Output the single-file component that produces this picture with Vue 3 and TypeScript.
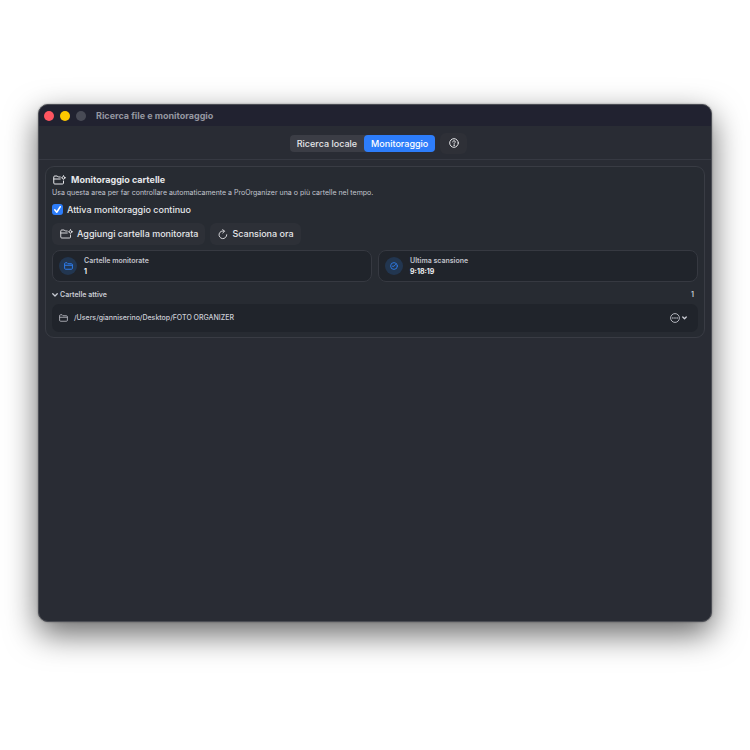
<script setup lang="ts">
import { ref } from 'vue'

type Tab = 'search' | 'watch'

const tabs: { id: Tab; label: string }[] = [
  { id: 'search', label: 'Ricerca locale' },
  { id: 'watch', label: 'Monitoraggio' },
]
const activeTab = ref<Tab>('watch')
const continuous = ref(true)
const expanded = ref(true)
const folders = ref<string[]>(['/Users/gianniserino/Desktop/FOTO ORGANIZER'])
const lastScan = ref('9:18:19')

function scanNow(): void {
  lastScan.value = new Date().toLocaleTimeString('it-IT')
}
</script>

<template>
  <div class="desktop">
    <main class="window">
      <header class="titlebar">
        <span class="light red"></span>
        <span class="light yellow"></span>
        <span class="light grey"></span>
        <h1 class="title">Ricerca file e monitoraggio</h1>
      </header>

      <nav class="toolbar">
        <div class="segments">
          <button
            v-for="tab in tabs"
            :key="tab.id"
            type="button"
            class="segment"
            :class="{ active: activeTab === tab.id }"
            :aria-pressed="activeTab === tab.id"
            @click="activeTab = tab.id"
          >
            {{ tab.label }}
          </button>
        </div>
        <button type="button" class="help" aria-label="Aiuto">
          <svg width="10" height="10" viewBox="0 0 20 20" fill="none" stroke="currentColor" stroke-width="2" stroke-linecap="round">
            <circle cx="10" cy="10" r="8.6" />
            <path d="M7.5 8c0-1.5 1.1-2.5 2.6-2.5s2.5 1 2.5 2.3c0 1.7-2.5 1.9-2.5 3.7" />
            <circle cx="10.1" cy="14.3" r=".5" />
          </svg>
        </button>
      </nav>

      <div class="content">
        <section class="panel">
          <h2 class="heading">
            <svg width="13" height="10" viewBox="0 0 26 20" fill="none" stroke="currentColor" stroke-width="2" stroke-linejoin="round" stroke-linecap="round">
              <path d="M14.5 4h-4L8.5 2h-5a2 2 0 0 0-2 2v12a2 2 0 0 0 2 2H19a2 2 0 0 0 2-2v-3.500M1.500 8h13" />
              <circle cx="21" cy="5.500" r="2.600" />
              <path d="M21 .8v.6M21 9.600v.6M16.600 5.500h.4M25 5.500h.4" stroke-width="1.400" />
            </svg>
            Monitoraggio cartelle
          </h2>
          <p class="description">
            Usa questa area per far controllare automaticamente a ProOrganizer una o più cartelle nel tempo.
          </p>

          <label class="check">
            <span class="box">
              <input v-model="continuous" type="checkbox" />
              <svg v-if="continuous" width="11" height="11" viewBox="0 0 22 22" fill="none" stroke="#fff" stroke-width="3" stroke-linecap="round" stroke-linejoin="round">
                <path d="M5.500 11.500l4 5L16.500 5.500" />
              </svg>
            </span>
            Attiva monitoraggio continuo
          </label>

          <div class="actions">
            <button type="button" class="action">
              <svg width="13" height="10" viewBox="0 0 26 20" fill="none" stroke="currentColor" stroke-width="1.800" stroke-linejoin="round" stroke-linecap="round">
                <path d="M14.500 4h-4L8.500 2h-5a2 2 0 0 0-2 2v12a2 2 0 0 0 2 2H19a2 2 0 0 0 2-2v-3.500M1.500 8h13" />
                <circle cx="21" cy="5.500" r="2.600" />
                <path d="M21 .8v.6M21 9.600v.6M16.600 5.500h.4M25 5.500h.4" stroke-width="1.400" />
              </svg>
              Aggiungi cartella monitorata
            </button>
            <button type="button" class="action" @click="scanNow">
              <svg width="10" height="11" viewBox="0 0 20 22" fill="none" stroke="currentColor" stroke-width="1.800" stroke-linejoin="round" stroke-linecap="round">
                <path d="M17.500 11.500a7.700 7.700 0 1 1-5-7.200M9.500 1l3.500 3.500-3.500 3.500" />
              </svg>
              Scansiona ora
            </button>
          </div>

          <div class="stats">
            <div class="stat">
              <span class="badge">
                <svg width="9" height="8" viewBox="0 0 18 16" fill="none" stroke="currentColor" stroke-width="1.900" stroke-linejoin="round">
                  <path d="M1.200 12.500v-9a2 2 0 0 1 2-2h3l2 2h6.600a2 2 0 0 1 2 2v7a2 2 0 0 1-2 2H3.200a2 2 0 0 1-2-2zM1.200 6.500h15.600" />
                </svg>
              </span>
              <div class="figures">
                <span class="caption">Cartelle monitorate</span>
                <strong class="value">{{ folders.length }}</strong>
              </div>
            </div>
            <div class="stat">
              <span class="badge">
                <svg width="8" height="8" viewBox="0 0 16 16" fill="none" stroke="currentColor" stroke-width="1.700" stroke-linecap="round">
                  <circle cx="8" cy="8" r="6.800" />
                  <path d="M11 5L8 8.500H5" />
                </svg>
              </span>
              <div class="figures">
                <span class="caption">Ultima scansione</span>
                <strong class="value">{{ lastScan }}</strong>
              </div>
            </div>
          </div>

          <button type="button" class="disclosure" :aria-expanded="expanded" @click="expanded = !expanded">
            <svg width="6" height="4" viewBox="0 0 12 8" fill="none" stroke="currentColor" stroke-width="2.600" stroke-linecap="round" stroke-linejoin="round">
              <path d="M1.500 1.500L6 6l4.500-4.500" />
            </svg>
            <span>Cartelle attive</span>
            <span class="count">{{ folders.length }}</span>
          </button>

          <ul v-if="expanded" class="folders">
            <li v-for="folder in folders" :key="folder" class="folder">
              <svg width="9" height="8" viewBox="0 0 18 16" fill="none" stroke="currentColor" stroke-width="1.500" stroke-linejoin="round">
                <path d="M1.200 12.500v-9a2 2 0 0 1 2-2h3l2 2h6.600a2 2 0 0 1 2 2v7a2 2 0 0 1-2 2H3.200a2 2 0 0 1-2-2zM1.200 6.500h15.600" />
              </svg>
              <span class="path">{{ folder }}</span>
              <button type="button" class="more" aria-label="Azioni cartella">
                <svg width="10" height="10" viewBox="0 0 20 20" fill="none" stroke="currentColor" stroke-width="1.700">
                  <circle cx="10" cy="10" r="8.800" />
                  <g fill="currentColor" stroke="none">
                    <circle cx="5.800" cy="10" r="1.500" />
                    <circle cx="10" cy="10" r="1.500" />
                    <circle cx="14.200" cy="10" r="1.500" />
                  </g>
                </svg>
                <svg width="5" height="4" viewBox="0 0 10 8" fill="none" stroke="currentColor" stroke-width="2.600" stroke-linecap="round" stroke-linejoin="round">
                  <path d="M1.500 2L5 5.500 8.500 2" />
                </svg>
              </button>
            </li>
          </ul>
        </section>
      </div>
    </main>
  </div>
</template>

<style>
body {
  background: #fff;
}
</style>

<style scoped>
.desktop {
  box-sizing: border-box;
  display: flex;
  min-height: 100vh;
  padding: 104px 38px 128px;
  font-family: Inter, "Liberation Sans", sans-serif;
  color: #e6e7ea;
}

.window {
  flex: 1;
  display: flex;
  flex-direction: column;
  box-sizing: border-box;
  min-width: 0;
  border: 1px solid #4b4d54;
  border-radius: 10px;
  overflow: hidden;
  background: #292c34;
  box-shadow: 0 12px 32px rgba(0, 0, 0, 0.6), 0 0 2px rgba(0, 0, 0, 0.4);
}

button {
  margin: 0;
  padding: 0;
  border: 0;
  background: none;
  color: inherit;
  font-family: inherit;
}

svg {
  display: block;
  flex: none;
}

.titlebar {
  display: flex;
  align-items: center;
  gap: 6px;
  height: 21px;
  padding: 0 5px;
  background: #212230;
}

.light {
  width: 10px;
  height: 10px;
  border-radius: 50%;
}

.red {
  background: #ff5560;
}

.yellow {
  background: #fdc800;
}

.grey {
  background: #484a55;
}

.title {
  margin: 0 0 0 4px;
  font-size: 9px;
  font-weight: 700;
  line-height: 12px;
  color: #9597a0;
}

.toolbar {
  display: flex;
  align-items: center;
  justify-content: center;
  gap: 5px;
  height: 32px;
  padding: 1px 0 0 7px;
  border-bottom: 1px solid #363942;
}

.segments {
  display: flex;
  border-radius: 4px;
  background: #3b3d45;
}

.segment {
  padding: 0 7px;
  border-radius: 4px;
  font-size: 9px;
  font-weight: 450;
  line-height: 17px;
}

.segment.active {
  background: #2d7dfa;
  color: #fff;
}

.help {
  display: grid;
  place-items: center;
  width: 27px;
  height: 21px;
  border-radius: 6px;
  background: #2e3037;
}

.content {
  padding: 6px;
}

.panel {
  padding: 7px 6px 5px;
  border: 1px solid #393c44;
  border-radius: 9px;
  background: #272b32;
}

.heading {
  display: flex;
  align-items: center;
  gap: 5px;
  margin: 0 0 1px;
  padding-left: 1px;
  font-size: 9px;
  font-weight: 700;
  line-height: 12px;
}

.description {
  margin: 0;
  font-size: 7px;
  line-height: 12px;
  color: #c3c6d0;
}

.check {
  display: flex;
  align-items: center;
  gap: 4px;
  width: fit-content;
  margin-top: 4px;
  font-size: 9px;
  font-weight: 450;
  line-height: 13px;
}

.box {
  display: grid;
}

.box > * {
  grid-area: 1 / 1;
}

.box svg {
  pointer-events: none;
}

.box input {
  appearance: none;
  width: 11px;
  height: 11px;
  margin: 0;
  border-radius: 3px;
  background: #4a4d56;
}

.box input:checked {
  background: #2d7dfa;
}

.actions {
  display: flex;
  gap: 5px;
  margin-top: 7px;
}

.action {
  display: flex;
  align-items: center;
  gap: 4px;
  height: 22px;
  padding: 0 7px 0 8px;
  border-radius: 6px;
  background: #2d3037;
  font-size: 9px;
  font-weight: 450;
  line-height: 12px;
}

.stats {
  display: grid;
  grid-template-columns: 1fr 1fr;
  gap: 6px;
  margin-top: 5px;
}

.stat {
  display: flex;
  align-items: center;
  gap: 7px;
  padding: 4px 6px;
  border: 1px solid #363941;
  border-radius: 8px;
  background: #20242b;
}

.badge {
  display: grid;
  place-items: center;
  width: 18px;
  height: 18px;
  border-radius: 50%;
  background: #223650;
  color: #2f7ff2;
}

.figures {
  display: flex;
  flex-direction: column;
  font-size: 7px;
  line-height: 11px;
}

.caption {
  font-weight: 600;
  color: #c0c3cb;
}

.value {
  font-weight: 700;
  color: #eeeff1;
}

.disclosure {
  display: flex;
  align-items: center;
  gap: 2px;
  width: 100%;
  margin-top: 7px;
  font-size: 7px;
  font-weight: 600;
  line-height: 12px;
  color: #c9ccd4;
}

.count {
  margin-left: auto;
  padding-right: 4px;
}

.folders {
  margin: 3px 0 0;
  padding: 0;
  list-style: none;
}

.folder {
  display: flex;
  align-items: center;
  gap: 6px;
  height: 28px;
  padding: 0 11px 0 7px;
  border-radius: 7px;
  background: #20242b;
  font-size: 7px;
  font-weight: 500;
  line-height: 12px;
  color: #ccced6;
}

.path {
  flex: 1;
  min-width: 0;
}

.more {
  display: flex;
  align-items: center;
  gap: 2px;
}
</style>
